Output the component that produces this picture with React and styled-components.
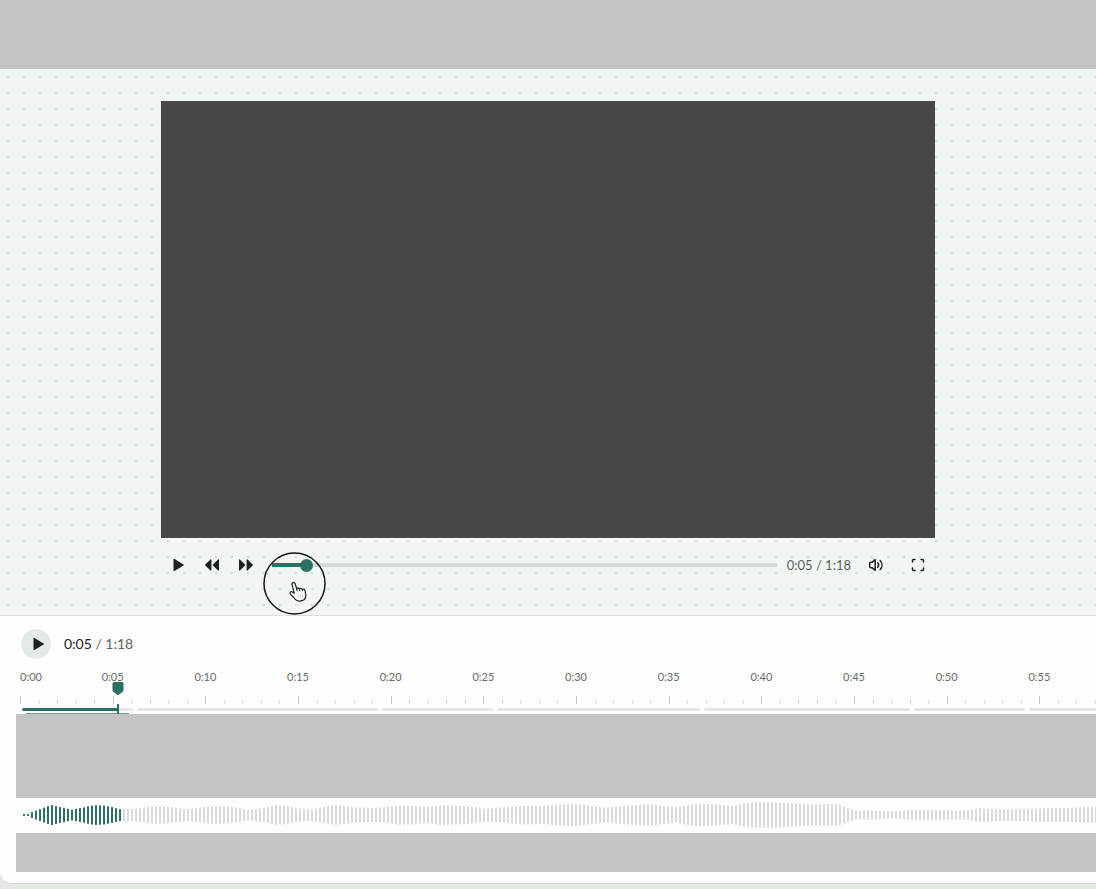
import React, { useState } from 'react';
import styled, { createGlobalStyle } from 'styled-components';

const GlobalStyle = createGlobalStyle`
  * {
    box-sizing: border-box;
  }
  body {
    margin: 0;
    background: #e4e8e3;
    color: #1d2220;
    font-family: Lato, 'Liberation Sans', Arial, sans-serif;
  }
  button {
    padding: 0;
    border: none;
    background: none;
    color: inherit;
    cursor: pointer;
  }
`;

const DURATION = 78;
const PLAYED_WIDTH = 98;

const Page = styled.div`
  overflow: hidden;
  padding-bottom: 6px;
`;
const Banner = styled.header`
  height: 69px;
  background: #c4c4c4;
`;
const Stage = styled.main`
  display: flex;
  flex-direction: column;
  align-items: center;
  padding: 32px 16px 23px;
  border-bottom: 1px solid #dbe0dc;
  background-color: #f2f6f2;
  background-image: radial-gradient(circle, #d3dcd5 1px, transparent 1px);
  background-size: 16px 16px;
`;
const Player = styled.section`
  width: 100%;
  max-width: 774px;
`;
const Video = styled.div`
  aspect-ratio: 774 / 437;
  background: #484846;
`;
const Controls = styled.div`
  display: flex;
  align-items: center;
  height: 54px;
`;
const IconButton = styled.button`
  display: flex;
  align-items: center;
  justify-content: center;
  flex: none;
  width: 34px;
  height: 34px;
  margin-left: ${({ $spaced }) => ($spaced ? '8px' : '0')};
`;
const Scrubber = styled.div`
  position: relative;
  display: flex;
  flex: 1;
  margin: 0 10px 0 9px;
`;
const Range = styled.input`
  appearance: none;
  width: 100%;
  height: 14px;
  margin: 0;
  border-radius: 2px;
  background: linear-gradient(#2b7064, #2b7064) 0 5px / 34px 4px no-repeat,
    linear-gradient(#d5dbd6, #d5dbd6) 0 5px / 100% 4px no-repeat;
  cursor: pointer;

  &::-webkit-slider-thumb {
    appearance: none;
    width: 13px;
    height: 13px;
    border-radius: 50%;
    background: #2b7064;
  }
`;
const Pointer = styled.svg`
  position: absolute;
  left: -9px;
  top: -7px;
  pointer-events: none;
`;
const Clock = styled.span`
  font-size: ${({ $large }) => ($large ? '14px' : '13px')};
  line-height: 20px;
  white-space: nowrap;
  color: #5b625e;
`;
const Panel = styled.section`
  padding: 13px 0 11px 16px;
  border-bottom: 1px solid #d5ddd3;
  border-bottom-left-radius: 12px;
  background: #fdfdfd;
`;
const PanelHeader = styled.div`
  display: flex;
  align-items: center;
  gap: 13px;
  padding-left: 5px;
`;
const RoundButton = styled.button`
  display: flex;
  align-items: center;
  justify-content: center;
  width: 30px;
  height: 30px;
  padding-left: 3px;
  border-radius: 50%;
  background: #e4ebe5;
`;
const Current = styled.span`
  color: #1d2220;
`;
const Timeline = styled.div`
  position: relative;
  overflow: hidden;
  padding-top: 10px;
`;
const Ruler = styled.div`
  display: grid;
  grid-template-columns: repeat(12, 1fr);
  width: 1112px;
  margin-left: 4px;
`;
const Mark = styled.div`
  font-size: 11px;
  line-height: 16px;
  color: #666b68;
`;
const MarkLabel = styled.span`
  display: block;
  width: 40px;
  margin-left: ${({ $first }) => ($first ? '0' : '-20px')};
  text-align: ${({ $first }) => ($first ? 'left' : 'center')};
`;
const Ticks = styled.div`
  display: grid;
  grid-template-columns: repeat(5, 1fr);
  align-items: end;
  height: 19px;
`;
const Tick = styled.i`
  height: 4px;
  border-left: 1px solid #dadcda;

  &:first-child {
    height: 8px;
    border-color: #c2c5c3;
  }
`;
const Chapters = styled.div`
  display: flex;
  gap: 4px;
  margin: 4px 0 2px 6px;
`;
const Chapter = styled.div`
  flex: none;
  width: ${({ $width }) => $width}px;
  height: 3px;
  border-radius: 2px;
  background: ${({ $played }) =>
    $played ? 'linear-gradient(90deg, #2b7064 96px, #e4e5e4 96px)' : '#e4e5e4'};
`;
const ClipEdge = styled.div`
  width: 103px;
  height: 1px;
  margin-left: 10px;
  background: #6f9c94;
`;
const Playhead = styled.svg`
  position: absolute;
  left: 96px;
  top: 23px;
`;
const Lane = styled.div`
  height: ${({ $height }) => $height}px;
  background: #c4c4c4;
`;
const WaveLane = styled.div`
  overflow: hidden;
  height: 35px;
`;
const Wave = styled.svg`
  display: block;
`;

const chapters = [111, 241, 111, 203, 206, 111, 240];

// [offset, half height] samples along the audio track
const peaks = [
  [8, 1], [12, 1], [16, 3], [24, 6], [32, 9], [36, 10], [44, 8], [56, 5.5],
  [64, 7], [76, 9.5], [80, 10], [88, 9.5], [96, 8], [104, 6], [112, 6],
  [124, 7], [134, 8.5], [144, 9], [156, 8], [168, 6], [180, 7], [192, 8.5],
  [200, 9], [212, 8.5], [224, 7], [232, 5], [240, 6], [252, 8], [260, 10],
  [268, 9.5], [284, 6.5], [297, 6], [307, 8], [319, 10], [337, 8], [357, 7],
  [371, 8], [386, 10], [411, 8], [427, 10], [451, 9], [471, 6.5], [497, 8.5],
  [511, 9.5], [524, 9], [557, 11.5], [591, 7.5], [611, 9.5], [634, 11],
  [659, 7.5], [672, 10], [680, 11.5], [700, 10.5], [717, 9], [733, 12.5],
  [757, 13], [797, 10.5], [822, 11], [830, 7.5], [843, 4], [853, 5],
  [877, 3.5], [903, 5.5], [937, 4.5], [953, 5], [963, 7], [987, 6],
  [1013, 6.5], [1030, 7], [1053, 7], [1070, 8], [1084, 8],
];

const peakAt = (x) => {
  const next = peaks.findIndex(([px]) => px >= x);
  if (next <= 0) return peaks[0][1];
  const [x0, y0] = peaks[next - 1];
  const [x1, y1] = peaks[next];
  return y0 + ((y1 - y0) * (x - x0)) / (x1 - x0);
};

const bars = Array.from({ length: 269 }, (_, i) => 8 + i * 4);

const formatTime = (s) => `${Math.floor(s / 60)}:${String(Math.floor(s % 60)).padStart(2, '0')}`;

const PlayIcon = () => (
  <svg width="12" height="14" viewBox="0 0 12 14" fill="currentColor">
    <path d="M1.5 1.4c0-.5.5-.8 1-.5l9 5.500c.5.300.5.900 0 1.200l-9 5.500c-.5.300-1 0-1-.500z" />
  </svg>
);
const SkipIcon = ({ back }) => (
  <svg width="16" height="12" viewBox="0 0 16 12" fill="currentColor">
    <path
      transform={back ? 'translate(16) scale(-1 1)' : undefined}
      d="M1 1c0-.6.5-.8.9-.5l5.200 5c.3.300.3.700 0 1l-5.200 5c-.4.300-.9.100-.9-.500zM8.600 1c0-.6.5-.8.9-.5l5.200 5c.3.300.3.700 0 1l-5.200 5c-.4.300-.9.100-.9-.500z"
    />
  </svg>
);
const VolumeIcon = () => (
  <svg
    width="16"
    height="16"
    viewBox="0 0 16 16"
    fill="none"
    stroke="currentColor"
    strokeWidth="1.5"
    strokeLinecap="round"
    strokeLinejoin="round"
  >
    <path d="M7.200 2.700v10.600L4 10.700H2.700a1 1 0 0 1-1-1V6.300a1 1 0 0 1 1-1H4z" />
    <path d="M9.700 5.700c1.100 1.300 1.100 3.300 0 4.600M12.200 3.500c2.400 2.600 2.400 6.400 0 9" />
  </svg>
);
const FullscreenIcon = () => (
  <svg
    width="14"
    height="14"
    viewBox="0 0 14 14"
    fill="none"
    stroke="currentColor"
    strokeWidth="1.5"
    strokeLinecap="round"
    strokeLinejoin="round"
  >
    <path d="M1.500 4V2.500a1 1 0 0 1 1-1H4M10 1.500h1.500a1 1 0 0 1 1 1V4M12.500 10v1.500a1 1 0 0 1-1 1H10M4 12.500H2.500a1 1 0 0 1-1-1V10" />
  </svg>
);

const PointerRing = () => (
  <Pointer width="64" height="64" viewBox="0 0 64 64" fill="none" aria-hidden="true">
    <circle cx="31.500" cy="32.500" r="30.500" stroke="#161616" strokeWidth="1.500" />
    <path
      d="M29 33.500c-.5-2 2.600-2.700 3.200-.700l1.500 5.200c.3-1.200 2.400-1.200 2.800.1.600-1 2.400-.8 2.800.5.900-.8 2.300-.3 2.600.9l.7 3.500c.4 2.300-.1 4.600-1.700 5.800-2.400 1.700-6.100 1.700-8.300-.2-1.400-1.200-3.700-4.100-5.200-5.500-1.300-1.300.5-3.100 2.100-2.200l1.800 1.300z"
      fill="#fff"
      stroke="#1c1c1c"
      strokeWidth="1.200"
      strokeLinejoin="round"
    />
    <path d="M33.700 38l.5 2.300M36.500 38.200l.5 2M39.300 38.800l.3 1.500" stroke="#1c1c1c" />
    <path d="M34.500 43.500l.7 3.500M37 43.200l.6 3.500M39.400 43l.3 3.300" stroke="#b5b5b5" strokeWidth=".7" />
  </Pointer>
);

const App = () => {
  const [position, setPosition] = useState(4.4);

  return (
    <Page>
      <GlobalStyle />
      <Banner />
      <Stage>
        <Player>
          <Video />
          <Controls>
            <IconButton type="button" aria-label="Play">
              <PlayIcon />
            </IconButton>
            <IconButton type="button" aria-label="Rewind">
              <SkipIcon back />
            </IconButton>
            <IconButton type="button" aria-label="Fast forward">
              <SkipIcon />
            </IconButton>
            <Scrubber>
              <Range
                type="range"
                aria-label="Seek"
                min="0"
                max={DURATION}
                step="any"
                value={position}
                onChange={(e) => setPosition(Number(e.target.value))}
              />
              <PointerRing />
            </Scrubber>
            <Clock>0:05 / 1:18</Clock>
            <IconButton type="button" aria-label="Volume" $spaced>
              <VolumeIcon />
            </IconButton>
            <IconButton type="button" aria-label="Full screen" $spaced>
              <FullscreenIcon />
            </IconButton>
          </Controls>
        </Player>
      </Stage>

      <Panel>
        <PanelHeader>
          <RoundButton type="button" aria-label="Play timeline">
            <PlayIcon />
          </RoundButton>
          <Clock $large>
            <Current>0:05</Current> / 1:18
          </Clock>
        </PanelHeader>
        <Timeline>
          <Ruler>
            {Array.from({ length: 12 }, (_, i) => (
              <Mark key={i}>
                <MarkLabel $first={i === 0}>{formatTime(i * 5)}</MarkLabel>
                <Ticks>
                  {[0, 1, 2, 3, 4].map((t) => (
                    <Tick key={t} />
                  ))}
                </Ticks>
              </Mark>
            ))}
          </Ruler>
          <Chapters>
            {chapters.map((width, i) => (
              <Chapter key={i} $width={width} $played={i === 0} />
            ))}
          </Chapters>
          <ClipEdge />
          <Playhead width="12" height="33" viewBox="0 0 12 33" fill="#2b7064" aria-hidden="true">
            <path d="M2 0h8a1.500 1.500 0 0 1 1.500 1.500v6.500c0 1-.5 1.700-1.300 2.300L6 13.200l-4.200-2.900C1 9.700.5 9 .5 8V1.500A1.500 1.500 0 0 1 2 0z" />
            <path d="M5 22h2v11H5z" />
          </Playhead>
        </Timeline>
        <Lane $height={84} />
        <WaveLane>
          <Wave width="1084" height="35" viewBox="0 0 1084 35" aria-hidden="true">
            {bars.map((x) => (
              <rect
                key={x}
                x={x - 1}
                y={17 - peakAt(x)}
                width="2"
                height={peakAt(x) * 2}
                rx="0.5"
                fill={x < PLAYED_WIDTH + 8 ? '#2b7064' : '#dadada'}
              />
            ))}
          </Wave>
        </WaveLane>
        <Lane $height={39} />
      </Panel>
    </Page>
  );
};

export default App;
